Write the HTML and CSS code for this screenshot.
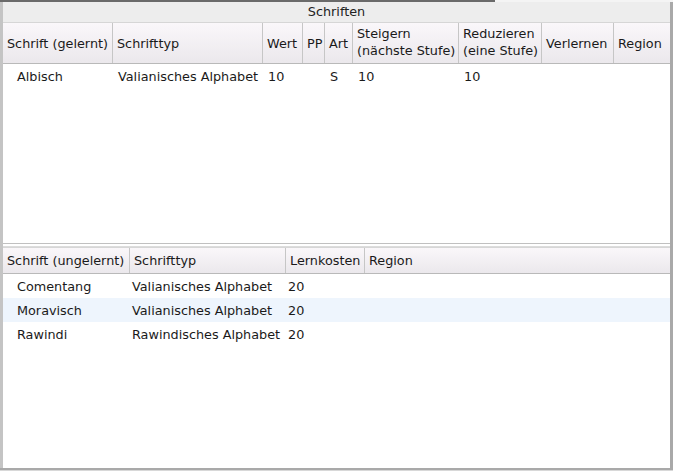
FILE: index.html
```html
<!DOCTYPE html>
<html>
<head>
<meta charset="utf-8">
<link rel="stylesheet" href="styles.css">
</head>
<body>
<div class="window">
  <div class="topline"></div>
  <div class="panel">
    <div class="title">Schriften</div>
    <div class="table learned">
      <div class="head cols1">
        <div class="hc">Schrift (gelernt)</div>
        <div class="hc">Schrifttyp</div>
        <div class="hc">Wert</div>
        <div class="hc">PP</div>
        <div class="hc">Art</div>
        <div class="hc two">Steigern<br>(nächste Stufe)</div>
        <div class="hc two">Reduzieren<br>(eine Stufe)</div>
        <div class="hc">Verlernen</div>
        <div class="hc">Region</div>
      </div>
      <div class="body">
        <div class="row cols1">
          <div class="c first">Albisch</div>
          <div class="c">Valianisches Alphabet</div>
          <div class="c">10</div>
          <div class="c"></div>
          <div class="c">S</div>
          <div class="c">10</div>
          <div class="c">10</div>
          <div class="c"></div>
          <div class="c"></div>
        </div>
      </div>
    </div>
    <div class="splitter"></div>
    <div class="table unlearned">
      <div class="head cols2">
        <div class="hc">Schrift (ungelernt)</div>
        <div class="hc">Schrifttyp</div>
        <div class="hc">Lernkosten</div>
        <div class="hc last">Region</div>
      </div>
      <div class="body">
        <div class="row cols2">
          <div class="c first">Comentang</div>
          <div class="c">Valianisches Alphabet</div>
          <div class="c">20</div>
          <div class="c"></div>
        </div>
        <div class="row cols2 alt">
          <div class="c first">Moravisch</div>
          <div class="c">Valianisches Alphabet</div>
          <div class="c">20</div>
          <div class="c"></div>
        </div>
        <div class="row cols2">
          <div class="c first">Rawindi</div>
          <div class="c">Rawindisches Alphabet</div>
          <div class="c">20</div>
          <div class="c"></div>
        </div>
      </div>
    </div>
  </div>
  <div class="bottomline"></div>
</div>
</body>
</html>
```

FILE: styles.css
```css
* { box-sizing: border-box; }
html, body {
  margin: 0;
  padding: 0;
  background: #ffffff;
}
body {
  font-family: "DejaVu Sans", sans-serif;
  font-size: 12.8px;
  color: #1a1a1a;
}
.window {
  width: 673px;
  height: 471px;
  display: flex;
  flex-direction: column;
  background: #f4f4f4;
}
.topline {
  width: 495px;
  height: 2px;
  background: #6a6a6a;
  flex: none;
}
.panel {
  flex: 1;
  display: flex;
  flex-direction: column;
  border-left: 3px solid #c4c4c4;
  border-right: 3px solid #a9a9a9;
  box-shadow: inset 1px 0 0 #e8e8e8;
  min-height: 0;
}
.title {
  height: 20px;
  flex: none;
  background: #ededed;
  text-align: center;
  line-height: 20px;
  color: #222;
}
.table {
  display: flex;
  flex-direction: column;
  background: #ffffff;
}
.learned { height: 221px; flex: none; }
.unlearned { flex: 1; min-height: 0; }
.head {
  display: grid;
  flex: none;
  background: linear-gradient(#faf7fa, #ebe8ec);
  border-top: 1px solid #d6d6d6;
  border-bottom: 1px solid #b9b9b9;
}
.learned .head { height: 42px; }
.unlearned .head { height: 27px; }
.cols1 {
  grid-template-columns: 110px 150px 40px 22px 28px 106px 83px 72px 1fr;
}
.cols2 {
  grid-template-columns: 127px 156px 79px 1fr;
}
.hc {
  display: flex;
  align-items: center;
  padding: 0 4px;
  border-right: 1px solid #c6c6c6;
  white-space: nowrap;
  line-height: 17px;
}
.hc.two { align-items: flex-start; padding-top: 2px; }
.hc:last-child { border-right: none; }
.body { flex: 1; }
.row {
  display: grid;
  height: 24px;
  align-items: center;
}
.row.alt { background: #eef5fd; }
.c {
  padding: 0 5px;
  white-space: nowrap;
}
.c.first { padding-left: 14px; }
.unlearned .c { padding-left: 2px; }
.unlearned .c.first { padding-left: 14px; }
.splitter {
  height: 4px;
  flex: none;
  background: #ffffff;
  border-top: 1px solid #c0c0c0;
  border-bottom: 1px solid #dcdcdc;
}
.bottomline {
  height: 3px;
  flex: none;
  background: #a9a9a9;
  border-bottom: 1px solid #d8d8d8;
}
```
